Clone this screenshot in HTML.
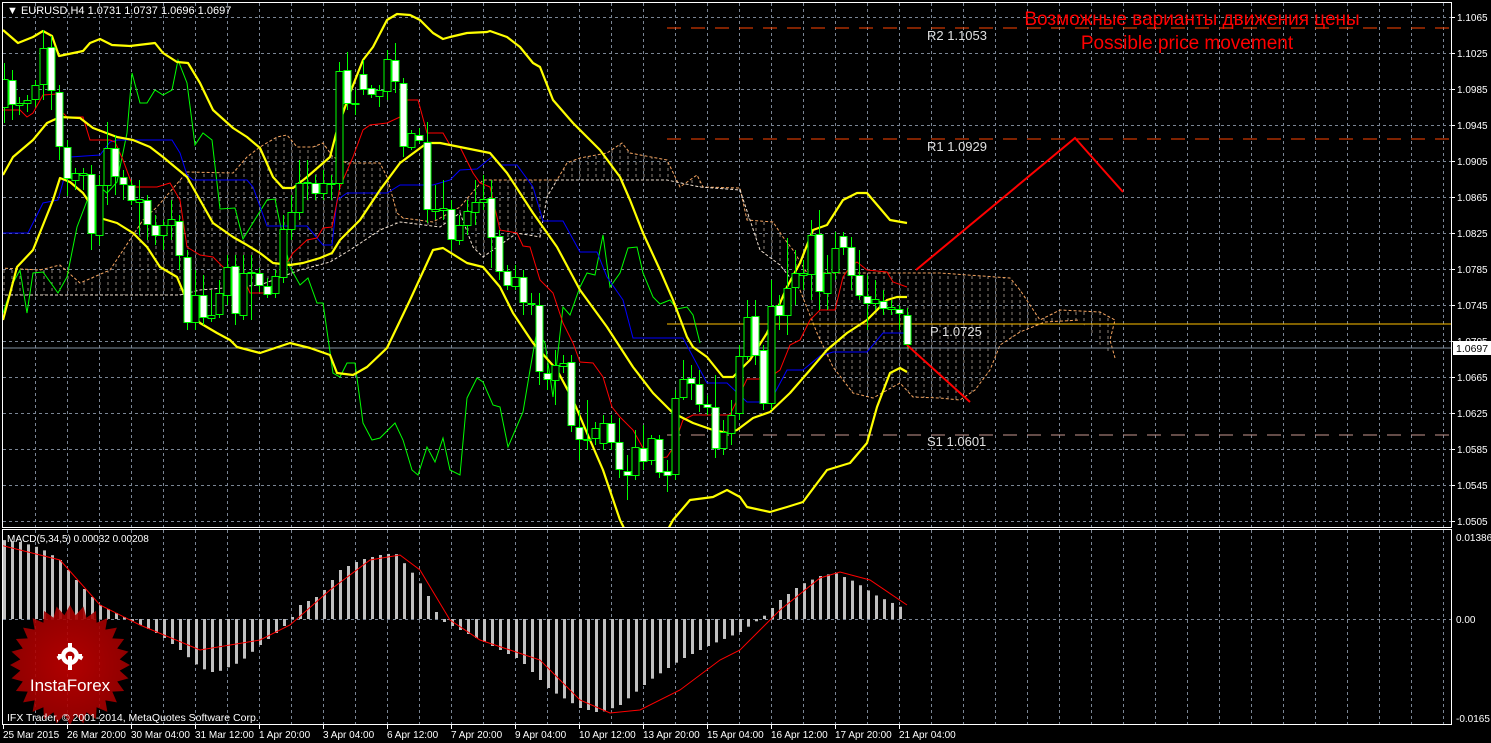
<!DOCTYPE html>
<html><head><meta charset="utf-8"><style>
html,body{margin:0;padding:0;background:#000;width:1491px;height:743px;overflow:hidden}
svg{display:block}
text{font-family:"Liberation Sans",sans-serif}
</style></head><body>
<svg id="s" width="1491" height="743" xmlns="http://www.w3.org/2000/svg">
<defs>
<pattern id="hatch" width="8" height="6" patternUnits="userSpaceOnUse">
<line x1="4" y1="0" x2="4" y2="3" stroke="#e8d8c8" stroke-width="1"/>
</pattern>
<clipPath id="mainclip"><rect x="3" y="3" width="1448" height="524"/></clipPath>
<clipPath id="macdclip"><rect x="3" y="530" width="1448" height="194"/></clipPath>
<radialGradient id="rg" cx="0.5" cy="0.5" r="0.5"><stop offset="0" stop-color="#c40000"/><stop offset="1" stop-color="#a00000"/></radialGradient>
</defs>
<rect width="1491" height="743" fill="#000"/>
<g id="grid"></g>
<g clip-path="url(#mainclip)">
<polygon fill="url(#hatch)" opacity="0.6" points="0,268 40,270 60,265 80,283 110,270 143,220 157,207 187,172 233,173 247,157 260,147 277,137 287,135 297,147 313,147 323,143 333,157 347,163 380,163 387,177 397,213 403,218 433,222 460,207 483,180 533,180 557,180 567,163 580,158 607,153 622,143 630,153 667,160 680,187 697,175 703,187 740,188 747,220 773,222 783,237 793,250 807,273 940,273 1010,278 1020,290 1040,320 1060,310 1100,312 1115,320 1110,340 1115,358 1100,345 1080,320 1045,322 1020,332 1000,345 990,370 975,390 960,400 940,398 913,397 900,383 873,398 853,393 833,367 817,333 800,290 780,265 760,250 740,190 700,187 667,180 557,180 547,197 540,237 517,233 483,257 473,247 460,213 440,227 400,222 380,230 350,250 330,262 300,270 260,285 200,290 180,295 0,295"/>
<polyline fill="none" stroke="#f4a460" stroke-width="1" stroke-dasharray="3,2" points="0,268 40,270 60,265 80,283 110,270 143,220 157,207 187,172 233,173 247,157 260,147 277,137 287,135 297,147 313,147 323,143 333,157 347,163 380,163 387,177 397,213 403,218 433,222 460,207 483,180 533,180 557,180 567,163 580,158 607,153 622,143 630,153 667,160 680,187 697,175 703,187 740,188 747,220 773,222 783,237 793,250 807,273 940,273 1010,278 1020,290 1040,320 1060,310 1100,312 1115,320 1110,340 1115,358"/>
<polyline fill="none" stroke="#f4a460" stroke-width="1" stroke-dasharray="3,2" points="800,290 817,333 833,367 853,393 873,398 900,383 913,397 940,398 960,400 975,390 990,370 1000,345 1020,332 1045,322 1080,320"/>
<polyline fill="none" stroke="#f0e0d0" stroke-width="1" stroke-dasharray="3,2" points="0,295 180,295 200,290 260,285 300,270 330,262 350,250 380,230 400,222 440,227 460,213 473,247 483,257 517,233 540,237 547,197 557,180 667,180 700,187 740,190 760,250 780,265 800,290"/>
<line x1="667" y1="28" x2="1451" y2="28" stroke="#ff4500" stroke-width="1" stroke-dasharray="14,10"/>
<line x1="667" y1="139" x2="1451" y2="139" stroke="#ff4500" stroke-width="1" stroke-dasharray="14,10"/>
<line x1="667" y1="324" x2="1451" y2="324" stroke="#ffc000" stroke-width="1"/>
<line x1="667" y1="435" x2="1451" y2="435" stroke="#c89890" stroke-width="1" stroke-dasharray="14,10"/>
<line x1="3" y1="348" x2="1451" y2="348" stroke="#8090a0" stroke-width="1"/>
<polyline fill="none" stroke="#00ff00" stroke-width="1" points="3,313 13,283 20,270 27,313 33,273 43,272 58,293 67,277 77,227 90,193 100,187 107,193 117,182 127,133 132,73 140,103 147,103 155,90 163,95 172,90 178,60 187,83 195,145 203,133 212,140 220,209 235,208 243,239 267,200 275,199 282,233 290,267 300,285 308,278 317,303 323,303 333,373 340,377 347,363 355,363 363,423 372,440 380,438 395,423 403,440 412,470 418,475 427,447 435,462 443,438 450,470 460,475 467,398 477,378 483,382 493,405 500,407 508,447 523,412 530,370 537,330 545,343 553,397 563,307 570,315 580,287 587,273 595,275 603,235 610,287 620,273 628,248 637,247 643,273 653,297 660,304 670,300 677,309 687,307 693,315 700,343"/>
<polyline fill="none" stroke="#0000ff" stroke-width="1" points="3,233 28,233 43,203 58,200 70,157 100,155 110,142 117,140 172,140 180,153 187,175 193,180 247,180 253,187 267,226 307,226 323,245 332,245 337,200 347,193 387,193 400,185 433,185 450,180 460,170 477,169 493,156 500,165 517,165 533,187 543,221 563,221 580,252 597,252 607,277 623,300 633,338 683,338 707,383 727,383 747,402 770,402 787,370 803,370 820,356 833,352 867,352 883,333 905,333"/>
<polyline fill="none" stroke="#ff0000" stroke-width="1" points="3,110 20,110 27,117 33,113 43,95 57,94 63,113 67,117 83,117 90,140 110,140 115,142 123,160 133,187 157,187 170,183 180,200 187,247 200,255 213,257 223,267 243,277 250,293 263,293 273,290 287,263 293,253 307,240 317,238 323,228 332,227 340,187 353,157 363,130 370,125 387,123 400,117 403,100 418,100 427,133 443,133 450,145 460,147 473,173 480,183 490,187 500,230 517,233 523,246 530,247 540,280 553,293 563,323 573,343 580,362 593,363 603,377 612,407 620,417 633,430 643,448 653,450 660,458 667,457 673,448 683,420 693,415 730,415 747,379 767,379 780,370 790,345 800,340 810,320 820,310 835,310 843,277 850,267 857,262 867,270 887,272 893,282 907,287"/>
<g fill="none" stroke="#ffff00" stroke-width="2.2" stroke-linejoin="round">
<polyline points="3,30 18,43 33,37 43,31 52,36 59,56 83,51 90,43 100,39 112,45 130,46 155,43 163,53 177,62 188,63 200,83 213,110 233,128 247,137 260,148 273,177 283,188 293,188 307,177 330,157 337,130 350,93 363,60 373,47 387,20 397,14 410,15 420,20 433,33 443,39 450,37 467,33 487,32 490,31 507,37 520,47 533,63 540,67 553,100 573,123 583,133 600,150 620,177 630,200 643,233 660,270 673,300 687,337 693,347 707,357 723,377 733,377 750,360 767,333 787,287 800,263 813,230 827,225 843,200 857,193 867,193 890,220 907,223"/>
<polyline points="3,175 13,157 33,140 47,123 60,117 80,118 93,128 117,137 133,140 150,147 163,157 187,177 200,200 213,223 233,237 247,245 260,253 273,263 290,265 303,263 320,258 332,253 340,240 360,220 380,190 400,163 427,143 440,143 490,153 507,173 533,213 557,247 580,290 607,327 633,367 653,393 673,413 693,423 713,430 727,433 737,430 753,418 770,412 790,393 810,370 827,350 847,333 867,320 887,300 897,297 907,297"/>
<polyline points="3,320 17,267 33,250 53,200 60,178 70,182 83,193 100,218 117,223 133,233 147,247 160,267 177,277 192,313 200,323 217,333 230,340 237,347 260,353 290,343 310,348 330,355 337,373 353,375 367,367 387,348 410,300 433,250 443,248 467,263 483,267 500,287 513,313 533,343 557,370 573,400 587,433 603,470 620,520 630,540"/>
<polyline points="665,535 673,520 690,500 713,497 727,490 740,497 747,507 770,512 787,507 803,502 827,470 850,463 867,443 877,407 890,373 900,368 907,372"/>
</g>
<g id="candles"></g>
<polyline fill="none" stroke="#ff0000" stroke-width="2" points="916,270 1075,138 1123,192"/>
<line x1="907" y1="345" x2="970" y2="402" stroke="#ff0000" stroke-width="2"/>
</g>
<g font-family="Liberation Mono,monospace" font-size="13" fill="#e0e0e0">
<text x="927" y="40">R2 1.1053</text>
<text x="927" y="151">R1 1.0929</text>
<text x="930" y="336">P 1.0725</text>
<text x="927" y="446">S1 1.0601</text>
</g>
<text x="1192" y="25" fill="#ff0000" font-size="19" text-anchor="middle">Возможные варианты движения цены</text>
<text x="1187" y="49" fill="#ff0000" font-size="19" text-anchor="middle">Possible price movement</text>
<g clip-path="url(#macdclip)">
<g id="hist"></g>
<polygon id="star" fill="url(#rg)" opacity="0.9"/>
<g transform="translate(70,656)" fill="#fff">
<circle r="9"/>
<circle r="4.5" fill="#b00000"/>
<rect x="-2" y="-13" width="4" height="5"/><rect x="-12" y="-6" width="5" height="4" transform="rotate(-30)"/><rect x="7" y="-6" width="5" height="4" transform="rotate(30)"/>
<rect x="-12" y="-2" width="5" height="4"/><rect x="7" y="-2" width="5" height="4"/>
<rect x="-2" y="0" width="4" height="14"/>
</g>
<text x="70" y="691" fill="#fff" font-size="17" text-anchor="middle">InstaForex</text>
<polyline fill="none" stroke="#ff0000" stroke-width="1" points="0,545 60,560 100,605 140,625 200,650 260,640 290,625 330,590 370,560 400,555 420,570 450,620 480,640 540,660 580,700 610,713 640,710 680,690 720,660 740,650 780,610 820,578 840,572 870,580 907,605"/>
</g>
<text x="7" y="721" fill="#fff" font-size="10.5">IFX Trader, © 2001-2014, MetaQuotes Software Corp.</text>
<rect x="2.5" y="2.5" width="1449" height="525" fill="none" stroke="#fff" stroke-width="1"/>
<rect x="2.5" y="529.5" width="1449" height="195" fill="none" stroke="#fff" stroke-width="1"/>
<text x="7" y="14" fill="#fff" font-size="11">▼ EURUSD,H4  1.0731 1.0737 1.0696 1.0697</text>
<text x="7" y="542" fill="#fff" font-size="10">MACD(5,34,5) 0.00032 0.00208</text>
<g id="axis" font-size="10" fill="#fff"></g>
<rect x="1453" y="341" width="38" height="14" fill="#fff"/>
<text x="1456" y="352" fill="#000" font-size="10.5">1.0697</text>
</svg>
<script>
var NS="http://www.w3.org/2000/svg";
function el(p,t,a){var e=document.createElementNS(NS,t);for(var k in a)e.setAttribute(k,a[k]);p.appendChild(e);return e;}
var g=document.getElementById('grid');
for(var k=0;k<15;k++){var y=17+36*k;el(g,'line',{x1:3,y1:y+0.5,x2:1451,y2:y+0.5,stroke:'#7a8594','stroke-dasharray':'3,3'});}
el(g,'line',{x1:3,y1:619.5,x2:1451,y2:619.5,stroke:'#7a8594','stroke-dasharray':'3,3'});
for(var x=35;x<1451;x+=32){el(g,'line',{x1:x+0.5,y1:3,x2:x+0.5,y2:527,stroke:'#7a8594','stroke-dasharray':'3,3'});el(g,'line',{x1:x+0.5,y1:530,x2:x+0.5,y2:724,stroke:'#7a8594','stroke-dasharray':'3,3'});}
var C=[[4,79,107,63,123,0],[12,80,104,70,120,1],[19,103,105,97,115,0],[27,100,103,95,112,0],[35,85,99,80,107,0],[43,48,84,30,100,0],[51,47,90,36,110,1],[59,92,146,85,160,1],[67,147,178,140,196,1],[75,173,180,168,190,0],[83,173,175,168,190,0],[91,174,233,165,250,1],[99,185,235,175,245,0],[107,148,185,122,205,0],[115,148,176,135,195,1],[123,177,184,170,200,1],[131,185,200,180,205,1],[139,199,202,180,235,0],[147,200,224,195,240,1],[155,225,235,215,245,1],[163,225,235,220,250,0],[171,219,225,200,240,0],[179,221,255,215,270,1],[187,257,322,250,330,1],[195,295,322,270,330,0],[203,295,317,275,325,1],[211,315,318,290,322,0],[219,293,314,280,318,0],[227,267,295,255,305,0],[235,266,313,255,325,1],[243,273,315,255,320,0],[251,272,273,255,320,0],[259,273,285,268,292,1],[267,286,294,278,298,1],[275,276,293,270,298,0],[283,229,277,215,283,0],[291,212,229,195,240,0],[299,183,212,160,220,0],[307,182,183,160,200,0],[315,183,193,175,200,1],[323,183,193,170,200,0],[331,183,184,175,200,0],[339,71,183,62,190,0],[347,70,103,52,110,1],[355,103,104,90,115,0],[363,74,89,60,95,1],[371,88,94,85,98,1],[379,90,96,85,107,0],[387,59,91,50,100,0],[395,60,81,43,93,1],[403,83,146,78,157,1],[411,133,147,130,150,0],[419,135,140,128,143,1],[427,142,209,122,223,1],[435,209,211,185,220,0],[443,208,210,180,220,0],[451,209,239,200,250,1],[459,225,240,215,245,0],[467,211,225,200,235,0],[475,202,212,180,225,0],[483,199,202,175,210,0],[491,198,237,180,268,1],[499,236,271,230,280,1],[507,271,285,265,290,1],[515,277,286,265,290,0],[523,277,302,270,315,1],[531,303,304,293,315,0],[539,305,371,293,385,1],[547,373,379,365,390,1],[555,365,380,350,405,0],[563,363,366,355,373,0],[571,362,425,355,432,1],[579,427,439,410,460,1],[587,439,440,400,450,0],[595,428,438,422,445,0],[603,423,443,415,450,0],[611,423,442,415,450,1],[619,442,469,418,478,1],[627,471,475,455,500,1],[635,447,475,430,480,0],[643,448,461,425,470,1],[651,438,460,435,465,0],[659,439,472,435,478,1],[667,471,475,460,492,1],[675,398,474,390,480,0],[683,379,397,360,400,0],[691,378,383,365,400,1],[699,384,404,370,412,1],[707,404,407,395,415,1],[715,407,448,375,458,1],[723,432,448,420,455,0],[731,415,433,400,445,0],[739,356,413,345,420,0],[747,317,356,300,360,0],[755,316,355,300,365,1],[763,350,403,345,410,1],[771,306,403,280,410,0],[779,305,315,295,330,1],[787,288,315,238,335,0],[795,273,287,250,305,0],[803,273,275,260,290,0],[811,235,274,220,300,0],[819,234,291,210,310,1],[827,273,293,255,310,0],[835,248,272,232,280,0],[843,236,247,232,255,1],[851,247,275,237,290,1],[859,275,295,250,300,1],[867,296,303,275,330,1],[875,299,303,280,310,0],[883,301,308,290,315,1],[891,307,309,300,315,0],[899,309,313,305,330,1],[907,315,344,308,348,1]];
var cg=document.getElementById('candles');
C.forEach(function(c){el(cg,'line',{x1:c[0]+0.5,y1:c[3],x2:c[0]+0.5,y2:c[4],stroke:'#00ff00'});
var h=Math.max(1,c[2]-c[1]);el(cg,'rect',{x:c[0]-3,y:c[1]+0.5,width:7,height:h,fill:c[5]?'#fff':'#000',stroke:'#00ff00'});});
var H=[[3,540],[20,542],[40,548],[60,560],[80,585],[100,605],[120,615],[140,625],[160,635],[180,650],[200,668],[215,673],[240,662],[260,645],[280,630],[290,620],[300,605],[320,595],[340,570],[360,560],[380,555],[395,553],[410,570],[425,590],[440,620],[460,630],[490,645],[520,660],[550,690],[580,708],[600,713],[620,705],[650,680],[680,660],[710,645],[740,632],[755,622],[765,615],[780,600],[800,585],[820,576],[835,573],[855,582],[875,595],[890,602],[907,610]];
function hv(x){for(var i=0;i<H.length-1;i++){if(x>=H[i][0]&&x<=H[i+1][0]){var t=(x-H[i][0])/(H[i+1][0]-H[i][0]);return H[i][1]+t*(H[i+1][1]-H[i][1]);}}return H[H.length-1][1];}
var hg=document.getElementById('hist');
for(var x=4;x<=907;x+=8){var y=hv(x);var a=Math.min(y,619),b=Math.max(y,619);el(hg,'rect',{x:x-1,y:a,width:3,height:Math.max(1,b-a),fill:'#c0c0c0'});}
var pts=[];for(var i=0;i<56;i++){var ang=i*Math.PI/28;var r=i%2?50:60;pts.push((70+r*Math.sin(ang)).toFixed(1)+','+(665-r*Math.cos(ang)).toFixed(1));}
document.getElementById('star').setAttribute('points',pts.join(' '));
var ax=document.getElementById('axis');
var v=1.1065;for(var k=0;k<15;k++){var y=17+36*k;el(ax,'line',{x1:1451,y1:y+0.5,x2:1455,y2:y+0.5,stroke:'#fff'});var t=el(ax,'text',{x:1457,y:y+4});t.textContent=(v-0.004*k).toFixed(4);}
[[537,'0.01386'],[619,'0.00'],[718,'-0.0165']].forEach(function(p){var t=el(ax,'text',{x:1456,y:p[0]+4});t.textContent=p[1];});
var L=['25 Mar 2015','26 Mar 20:00','30 Mar 04:00','31 Mar 12:00','1 Apr 20:00','3 Apr 04:00','6 Apr 12:00','7 Apr 20:00','9 Apr 04:00','10 Apr 12:00','13 Apr 20:00','15 Apr 04:00','16 Apr 12:00','17 Apr 20:00','21 Apr 04:00'];
L.forEach(function(s,i){var x=3+64*i;el(ax,'line',{x1:x+0.5,y1:724,x2:x+0.5,y2:729,stroke:'#fff'});var t=el(ax,'text',{x:x,y:738});t.textContent=s;});
</script>
</body></html>
